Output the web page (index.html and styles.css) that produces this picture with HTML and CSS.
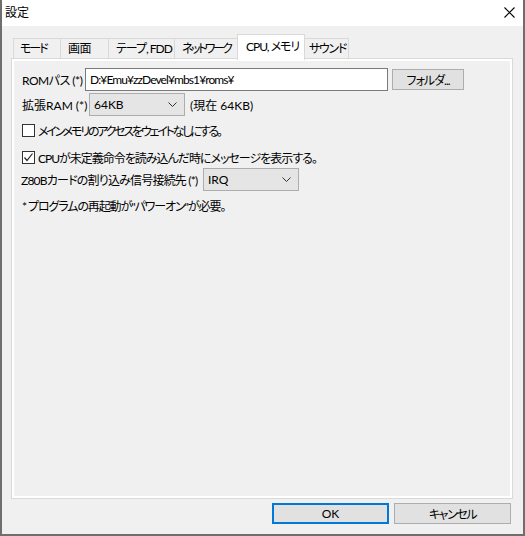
FILE: index.html
```html
<!DOCTYPE html>
<html lang="ja">
<head>
    <meta charset="UTF-8">
    <title>設定</title>
    <link rel="stylesheet" href="styles.css">
</head>
<body>
    <div class="window">
        <div class="titlebar">
            <span class="title">設定</span>
            <svg class="close" width="11" height="11" viewBox="0 0 11 11">
                <path d="M0.5 0.5 L10.5 10.5 M10.5 0.5 L0.5 10.5" stroke="#000" stroke-width="1.1" fill="none"/>
            </svg>
        </div>

        <div class="client">
            <div class="tabs">
                <div class="tab tab-mode">モード</div>
                <div class="tab tab-screen">画面</div>
                <div class="tab tab-tape">テープ, FDD</div>
                <div class="tab tab-net">ネットワーク</div>
                <div class="tab tab-cpu active">CPU, メモリ</div>
                <div class="tab tab-sound">サウンド</div>
            </div>

            <div class="panel">
                <div class="page">
                    <div class="row row-rom">
                        <span class="label label-rom">ROMパス (*)</span>
                        <div class="textbox">D:¥Emu¥zzDevel¥mbs1¥roms¥</div>
                        <div class="button btn-folder">フォルダ...</div>
                    </div>

                    <div class="row row-ram">
                        <span class="label label-ram">拡張RAM (*)</span>
                        <div class="combo combo-ram">
                            <span>64KB</span>
                            <svg width="9" height="5" viewBox="0 0 9 5"><path d="M0.5 0.5 L4.5 4.5 L8.5 0.5" stroke="#333" fill="none"/></svg>
                        </div>
                        <span class="note">(現在 64KB)</span>
                    </div>

                    <div class="row row-check row-wait">
                        <span class="checkbox"></span>
                        <span class="text-wait">メインメモリのアクセスをウェイトなしにする。</span>
                    </div>

                    <div class="row row-check row-msg">
                        <span class="checkbox">
                            <svg width="11" height="11" viewBox="0 0 11 11"><path d="M1.5 5.5 L4 8.5 L9.5 1.5" stroke="#222" stroke-width="1.2" fill="none"/></svg>
                        </span>
                        <span class="text-msg">CPUが未定義命令を読み込んだ時にメッセージを表示する。</span>
                    </div>

                    <div class="row row-irq">
                        <span class="label label-irq">Z80Bカードの割り込み信号接続先 (*)</span>
                        <div class="combo combo-irq">
                            <span>IRQ</span>
                            <svg width="9" height="5" viewBox="0 0 9 5"><path d="M0.5 0.5 L4.5 4.5 L8.5 0.5" stroke="#333" fill="none"/></svg>
                        </div>
                    </div>

                    <div class="row row-hint">
                        <span class="text-hint">* プログラムの再起動が"パワーオン"が必要。</span>
                    </div>
                </div>
            </div>

            <div class="footer">
                <div class="button btn-ok">OK</div>
                <div class="button btn-cancel">キャンセル</div>
            </div>
        </div>
    </div>
</body>
</html>
```

FILE: styles.css
```css
* {
    margin: 0;
    padding: 0;
    box-sizing: border-box;
}

body {
    background-color: #fff;
    font-family: Lato, "Noto Sans CJK JP", sans-serif;
    font-size: 12px;
    font-feature-settings: "palt";
    color: #000;
}

.window {
    width: 525px;
    height: 536px;
    border: 2px solid #6e6e6e;
    border-top: none;
    background-color: #f0f0f0;
    display: flex;
    flex-direction: column;
}

.titlebar {
    height: 26px;
    background-color: #fff;
    display: flex;
    align-items: center;
    justify-content: space-between;
    padding: 0 8px 1px 3px;
}

.titlebar .title {
    line-height: 16px;
}

.client {
    flex: 1;
    display: flex;
    flex-direction: column;
    padding-top: 8px;
}

/* tabs */
.tabs {
    display: flex;
    height: 25px;
    margin-left: 11px;
}

.tab {
    align-self: flex-end;
    height: 21px;
    border: 1px solid #d9d9d9;
    border-bottom: none;
    margin-right: -1px;
    padding-left: 6px;
    line-height: 19px;
    white-space: nowrap;
    overflow: hidden;
    background-color: #f0f0f0;
}

.tab-mode { width: 48px; letter-spacing: -2px; }
.tab-screen { width: 49px; padding-left: 7px; letter-spacing: -0.5px; }
.tab-tape { width: 67px; padding-left: 7px; letter-spacing: -1px; }
.tab-net { width: 64px; padding-left: 7px; letter-spacing: -2.5px; }
.tab-sound { width: 45px; padding-left: 4px; letter-spacing: -1.3px; }

.tab.active {
    align-self: flex-start;
    width: 68px;
    height: 26px;
    padding-left: 8px;
    line-height: 23px;
    letter-spacing: -1px;
    background-color: #fff;
    position: relative;
    z-index: 1;
}

/* page */
.panel {
    margin: -1px 0 0 9px;
    width: 502px;
    height: 441px;
    border: 1px solid #d9d9d9;
    background-color: #fff;
    padding: 2px;
}

.page {
    height: 100%;
    background-color: #f0f0f0;
    padding: 7px 8px 0;
    display: flex;
    flex-direction: column;
}

.row {
    display: flex;
    align-items: center;
    white-space: nowrap;
}

.row-rom { height: 23px; }
.row-ram { height: 23px; margin-top: 2px; }
.row-wait { height: 16px; margin-top: 6px; }
.row-msg { height: 16px; margin-top: 11px; }
.row-irq { height: 23px; margin-top: 3px; margin-left: -1px; }
.row-hint { height: 16px; margin-top: 6px; }

.label-rom { width: 63px; letter-spacing: -0.5px; }
.label-ram { width: 67px; }
.label-irq { width: 182px; letter-spacing: -0.8px; }

.text-wait { letter-spacing: -2.2px; }
.text-msg { letter-spacing: -1px; }
.text-hint { letter-spacing: -1.1px; }

.textbox {
    width: 303px;
    height: 23px;
    border: 1px solid #7a7a7a;
    background-color: #fff;
    padding-left: 4px;
    line-height: 21px;
    letter-spacing: -0.9px;
}

.button {
    display: flex;
    align-items: center;
    justify-content: center;
    background-color: #e1e1e1;
    border: 1px solid #adadad;
}

.btn-folder {
    width: 72px;
    height: 21px;
    margin-left: 4px;
    letter-spacing: -1px;
}

.combo {
    height: 23px;
    border: 1px solid #adadad;
    background-color: #e5e5e5;
    display: flex;
    align-items: center;
    justify-content: space-between;
    padding: 0 7px 0 4px;
}

.combo-ram { width: 96px; }
.combo-irq { width: 96px; }

.note {
    margin-left: 5px;
}

.row-check .checkbox {
    width: 13px;
    height: 13px;
    border: 1px solid #333;
    background-color: #fff;
    margin-right: 3px;
    display: flex;
    align-items: center;
    justify-content: center;
}

/* footer */
.footer {
    display: flex;
    justify-content: flex-end;
    gap: 5px;
    margin-top: 4px;
    padding-right: 12px;
}

.footer .button {
    width: 117px;
    height: 21px;
}

.btn-cancel {
    letter-spacing: -1.4px;
}

.btn-ok {
    border: 2px solid #0078d7 !important;
}
```
